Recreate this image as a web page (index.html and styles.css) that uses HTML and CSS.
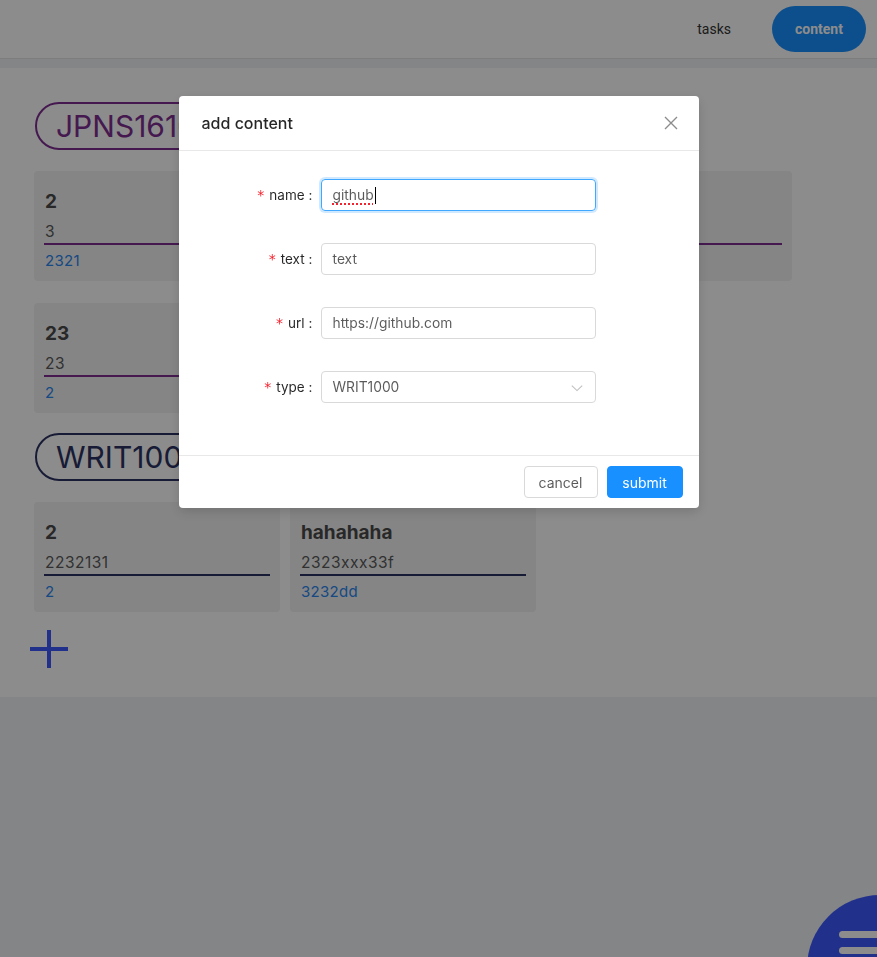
FILE: index.html
```html
<!DOCTYPE html>
<html lang="en">
<head>
<meta charset="utf-8">
<title>content</title>
<link rel="stylesheet" href="styles.css">
</head>
<body>
<header class="topbar">
  <nav class="nav">
    <a class="nav-link">tasks</a>
    <a class="nav-pill">content</a>
  </nav>
</header>

<main class="panel">
  <section class="group group-purple">
    <div class="tag">JPNS1610</div>
    <div class="cards">
      <div class="card"><div class="card-title">2</div><div class="card-value">3</div><a class="card-link">2321</a></div>
      <div class="card"><div class="card-title">1</div><div class="card-value">1</div><a class="card-link">1</a></div>
      <div class="card"><div class="card-title">3</div><div class="card-value">3</div><a class="card-link">3</a></div>
      <div class="card"><div class="card-title">23</div><div class="card-value">23</div><a class="card-link">2</a></div>
    </div>
  </section>
  <section class="group group-navy">
    <div class="tag">WRIT1000</div>
    <div class="cards">
      <div class="card"><div class="card-title">2</div><div class="card-value">2232131</div><a class="card-link">2</a></div>
      <div class="card"><div class="card-title">hahahaha</div><div class="card-value">2323xxx33f</div><a class="card-link">3232dd</a></div>
    </div>
  </section>
  <div class="add-btn" aria-label="add">
    <svg width="38" height="38" viewBox="0 0 38 38"><path d="M19 0v38M0 19h38" stroke="#3d5afe" stroke-width="4" fill="none"/></svg>
  </div>
</main>

<div class="fab"><span class="fab-line l1"></span><span class="fab-line l2"></span><span class="fab-line l3"></span></div>

<div class="mask"></div>

<div class="modal-wrap">
  <div class="modal">
    <div class="modal-header">
      <div class="modal-title">add content</div>
      <button class="modal-close" aria-label="close">
        <svg width="14" height="14" viewBox="0 0 14 14"><path d="M1 1L13 13M13 1L1 13" stroke="rgba(0,0,0,0.45)" stroke-width="1.4" fill="none"/></svg>
      </button>
    </div>
    <div class="modal-body">
      <div class="form-item">
        <div class="form-label"><span class="req">*</span><span>name</span><span class="colon">:</span></div>
        <div class="form-control">
          <div class="input focused"><span class="spell">github</span><span class="caret"></span></div>
        </div>
      </div>
      <div class="form-item">
        <div class="form-label"><span class="req">*</span><span>text</span><span class="colon">:</span></div>
        <div class="form-control"><div class="input">text</div></div>
      </div>
      <div class="form-item">
        <div class="form-label"><span class="req">*</span><span>url</span><span class="colon">:</span></div>
        <div class="form-control"><div class="input">https://github.com</div></div>
      </div>
      <div class="form-item">
        <div class="form-label"><span class="req">*</span><span>type</span><span class="colon">:</span></div>
        <div class="form-control">
          <div class="input select">WRIT1000
            <svg class="arrow" width="12" height="12" viewBox="0 0 12 12"><path d="M0.8 3.6L6 8.6L11.2 3.6" stroke="rgba(0,0,0,0.25)" stroke-width="1.1" fill="none"/></svg>
          </div>
        </div>
      </div>
    </div>
    <div class="modal-footer">
      <button class="btn btn-cancel">cancel</button>
      <button class="btn btn-primary">submit</button>
    </div>
  </div>
</div>
</body>
</html>
```
FILE: styles.css
```css
* { box-sizing: border-box; }
html, body { margin: 0; padding: 0; }
body {
  background: #f0f2f5;
  font-family: "Inter", "Roboto", "Noto Sans", sans-serif;
  height: 957px;
  overflow: hidden;
  color: rgba(0,0,0,0.85);
}

.topbar {
  height: 59px;
  background: #fff;
  border-bottom: 1px solid #e4e4e4;
  display: flex;
  align-items: center;
  justify-content: flex-end;
}
.nav { display: flex; align-items: center; }
.nav-link {
  font-family: "Roboto", sans-serif;
  font-size: 14px;
  color: #333;
  margin-right: 41px;
}
.nav-pill {
  font-family: "Roboto", sans-serif;
  width: 94px;
  height: 46px;
  border-radius: 23px;
  background: #1890ff;
  color: #fff;
  font-weight: 700;
  font-size: 14px;
  display: flex;
  align-items: center;
  justify-content: center;
  margin-right: 11px;
}

.panel {
  margin-top: 9px;
  background: #fff;
  padding: 34px 34px 29px 34px;
}
.group + .group { margin-top: 20px; }
.tag {
  display: inline-flex;
  align-items: center;
  height: 48px;
  padding: 0 22px 0 19px;
  margin-left: 1px;
  border: 2px solid;
  border-radius: 24px;
  font-size: 30px;
  font-weight: 400;
  margin-bottom: 21px;
}
.group-purple .tag { border-color: #7e2f91; color: #7e2f91; }
.group-navy .tag { border-color: #2c3262; color: #2c3262; }

.cards {
  display: flex;
  flex-wrap: wrap;
  gap: 22px 10px;
  width: 800px;
}
.card {
  width: 246px;
  height: 110px;
  background: #f3f3f3;
  border-radius: 4px;
  padding: 17px 10px 0 10px;
}
.card-title {
  font-size: 19px;
  line-height: 28px;
  font-weight: 700;
  color: #4a4a4a;
  padding-left: 1px;
}
.card-value {
  margin-top: 5px;
  font-size: 15.5px;
  line-height: 22px;
  color: #5a5a5a;
  padding-left: 1px;
  letter-spacing: 0.5px;
  border-bottom: 2px solid;
}
.group-purple .card-value { border-color: #7e2f91; }
.group-navy .card-value { border-color: #2c3262; }
.card-link {
  display: block;
  margin-top: 5px;
  font-size: 15px;
  line-height: 22px;
  color: #2a86ee;
  padding-left: 1px;
  letter-spacing: 0.3px;
}

.add-btn {
  margin-top: 18px;
  margin-left: -4px;
  width: 38px;
  height: 38px;
}
.add-btn svg { display: block; }

.fab {
  position: fixed;
  left: 807px;
  top: 895px;
  width: 146px;
  height: 146px;
  border-radius: 50%;
  background: #3d5afe;
}
.fab-line {
  position: absolute;
  left: 32px;
  width: 60px;
  height: 7px;
  border-radius: 4px;
  background: #fff;
}
.l1 { top: 36px; }
.l2 { top: 52px; }
.l3 { top: 68px; }

.mask {
  position: fixed;
  inset: 0;
  background: rgba(0,0,0,0.45);
}

.modal-wrap {
  position: fixed;
  inset: 0;
  display: flex;
  justify-content: center;
  align-items: flex-start;
  padding-top: 96px;
}
.modal {
  width: 520px;
  background: #fff;
  border-radius: 4px;
  box-shadow: 0 4px 12px rgba(0,0,0,0.15);
  font-family: "Inter", "Roboto", sans-serif;
}
.modal-header {
  height: 55px;
  padding: 16px 24px;
  border-bottom: 1px solid #e8e8e8;
  display: flex;
  align-items: center;
  justify-content: space-between;
}
.modal-title {
  font-size: 16px;
  font-weight: 500;
  color: rgba(0,0,0,0.85);
  line-height: 22px;
  margin-left: -1px;
}
.modal-close {
  border: 0;
  background: none;
  padding: 0;
  width: 14px;
  height: 14px;
  margin-right: -3px;
  display: flex;
}
.modal-body {
  padding: 24px;
  font-size: 14px;
  display: flow-root;
}
.form-item {
  display: flex;
  height: 40px;
  margin-bottom: 24px;
  align-items: center;
}
.form-label {
  width: 118px;
  padding-right: 8px;
  font-size: 13.5px;
  color: rgba(0,0,0,0.85);
  white-space: nowrap;
  display: flex;
  justify-content: flex-end;
  align-items: baseline;
}
.colon { margin-left: 4px; }
.req {
  color: #f5222d;
  margin-right: 5px;
  font-family: "DejaVu Sans", sans-serif;
  font-size: 14px;
}
.form-control { width: 275px; }
.input {
  height: 32px;
  border: 1px solid #d9d9d9;
  border-radius: 4px;
  padding: 0 11px;
  display: flex;
  align-items: center;
  font-size: 13.8px;
  color: rgba(0,0,0,0.65);
  position: relative;
}
.input.focused {
  border-color: #40a9ff;
  box-shadow: 0 0 0 2px rgba(24,144,255,0.2);
}
.spell {
  text-decoration: underline dotted #f5222d;
  text-decoration-thickness: 2px;
  text-underline-offset: 3px;
}
.caret {
  display: inline-block;
  width: 1px;
  height: 17px;
  background: #000;
  margin-left: 1px;
}
.select .arrow {
  position: absolute;
  right: 12px;
  top: 10px;
}
.modal-footer {
  border-top: 1px solid #e8e8e8;
  padding: 10px 16px;
  display: flex;
  justify-content: flex-end;
  gap: 9px;
}
.btn {
  height: 32px;
  padding: 0;
  border: 1px solid #d9d9d9;
  border-radius: 4px;
  background: #fff;
  color: rgba(0,0,0,0.65);
  font-family: "Inter", "Roboto", sans-serif;
  font-size: 14px;
}
.btn-cancel { width: 74px; }
.btn-primary {
  width: 76px;
  background: #1890ff;
  border-color: #1890ff;
  color: #fff;
}
```
